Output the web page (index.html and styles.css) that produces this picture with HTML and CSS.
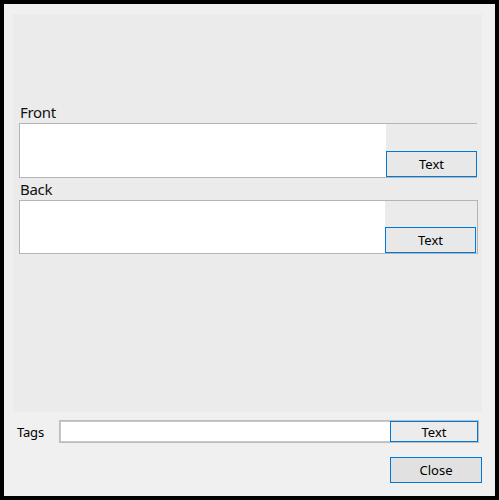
FILE: index.html
```html
<!DOCTYPE html>
<html>
<head>
<meta charset="utf-8">
<link rel="stylesheet" href="styles.css">
</head>
<body>
<div class="window">
  <div class="panel">
    <div class="label">Front</div>
    <div class="field front">
      <div class="editor"></div>
      <div class="side"><button class="btn">Text</button></div>
    </div>
    <div class="label back-label">Back</div>
    <div class="field back">
      <div class="editor"></div>
      <div class="side"><button class="btn">Text</button></div>
    </div>
  </div>
  <div class="tags-row">
    <span class="tags-label">Tags</span>
    <div class="tags-box">
      <div class="tags-input"></div>
      <button class="btn tags-btn">Text</button>
    </div>
  </div>
  <div class="footer">
    <button class="btn close">Close</button>
  </div>
</div>
</body>
</html>
```
FILE: styles.css
```css
* { box-sizing: border-box; }
html, body { margin: 0; padding: 0; }
body {
  background: #000;
  padding: 4px;
  width: 499px;
  height: 500px;
  font-family: "Noto Sans", "Open Sans", sans-serif;
  color: #000;
}
.window {
  width: 491px;
  height: 492px;
  background: #f0f0f0;
  display: flex;
  flex-direction: column;
}
.panel {
  margin: 10px 0 0 9px;
  width: 469px;
  height: 398px;
  background: #ebebeb;
  padding: 88px 0 0 6px;
  display: flex;
  flex-direction: column;
}
.label {
  font-size: 15px;
  line-height: 20px;
  height: 21px;
  padding-left: 1px;
  letter-spacing: -0.3px;
  color: #111;
}
.back-label {
  height: 22px;
  padding-top: 1px;
}
.field {
  display: flex;
  width: 458px;
  border: 1px solid #b4b4b4;
}
.field.front {
  height: 55px;
  border-right: none;
}
.field.back {
  height: 54px;
  width: 459px;
}
.editor {
  background: #fff;
  flex: 0 0 366px;
}
.back .editor { flex-basis: 365px; }
.side {
  flex: 1;
  display: flex;
  align-items: flex-end;
}
.btn {
  font-family: "Noto Sans", "Open Sans", sans-serif;
  font-size: 13px;
  color: #000;
  background: #e8e8e8;
  border: 1px solid #0078d7;
  padding: 0;
  margin: 0;
  width: 100%;
  height: 26px;
  line-height: 22px;
}
.back .btn { width: 91px; }
.tags-row {
  display: flex;
  align-items: center;
  margin: 8px 0 0 13px;
  height: 23px;
}
.tags-label {
  width: 42px;
  font-size: 13px;
  letter-spacing: -0.2px;
}
.tags-box {
  display: flex;
  width: 420px;
  height: 23px;
  border: 1px solid #bcbcbc;
}
.tags-input {
  flex: 0 0 330px;
  background: #fff;
  border: 1px solid #c8c8c8;
  border-right: none;
}
.tags-btn {
  flex: 1;
  height: 21px;
  line-height: 18px;
  background: #ececec;
}
.footer {
  display: flex;
  justify-content: flex-end;
  margin: 14px 13px 0 0;
}
.btn.close {
  width: 92px;
  height: 26px;
  background: #e1e1e1;
}
```
